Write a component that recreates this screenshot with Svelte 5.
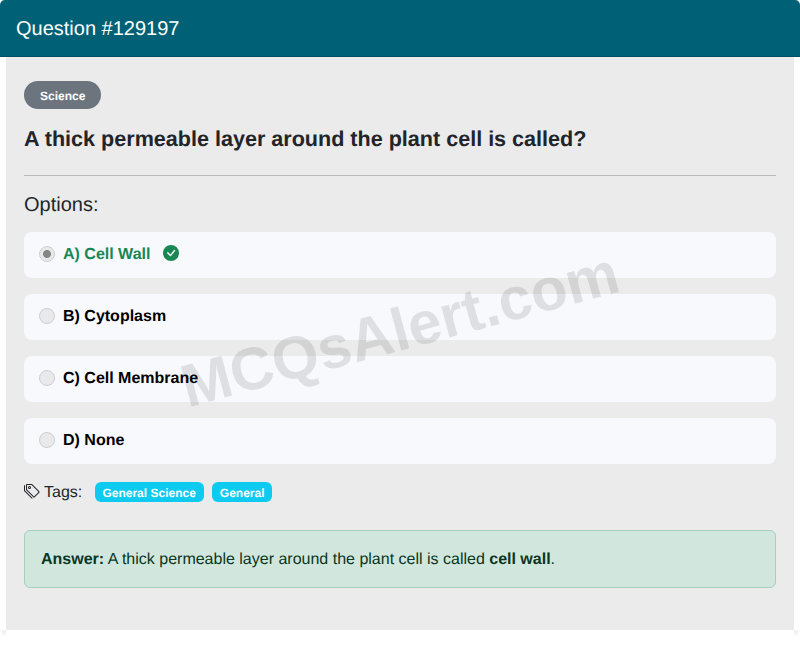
<script>
  const question = {
    id: 129197,
    category: 'Science',
    text: 'A thick permeable layer around the plant cell is called?',
    options: [
      { key: 'A', label: 'Cell Wall', correct: true },
      { key: 'B', label: 'Cytoplasm', correct: false },
      { key: 'C', label: 'Cell Membrane', correct: false },
      { key: 'D', label: 'None', correct: false }
    ],
    tags: ['General Science', 'General']
  };
</script>

<div class="card">
  <div class="card-header">Question #{question.id}</div>
  <div class="card-body">
    <div class="watermark" aria-hidden="true">MCQsAlert.com</div>
    <span class="category">{question.category}</span>
    <h1 class="question">{question.text}</h1>
    <hr />
    <h2 class="options-title">Options:</h2>
    <ul class="options">
      {#each question.options as option (option.key)}
        <li class="option" class:correct={option.correct}>
          <span class="radio"></span>
          <span class="option-label">{option.key}) {option.label}</span>
          {#if option.correct}
            <svg class="check" viewBox="0 0 16 16" fill="currentColor">
              <path d="M16 8A8 8 0 1 1 0 8a8 8 0 0 1 16 0m-3.97-3.03a.75.75 0 0 0-1.08.022L7.477 9.417 5.384 7.323a.75.75 0 0 0-1.06 1.06L6.97 11.03a.75.75 0 0 0 1.079-.02l3.992-4.99a.75.75 0 0 0-.01-1.05z" />
            </svg>
          {/if}
        </li>
      {/each}
    </ul>
    <div class="tags">
      <svg class="tags-icon" viewBox="0 0 16 16" fill="currentColor">
        <path d="M3 2v4.586l7 7L14.586 9l-7-7zM2 2a1 1 0 0 1 1-1h4.586a1 1 0 0 1 .707.293l7 7a1 1 0 0 1 0 1.414l-4.586 4.586a1 1 0 0 1-1.414 0l-7-7A1 1 0 0 1 2 6.586z" />
        <path d="M5.5 5a.5.5 0 1 1 0-1 .5.5 0 0 1 0 1m0 1a1.5 1.5 0 1 0 0-3 1.5 1.5 0 0 0 0 3M1 7.086a1 1 0 0 0 .293.707L8.75 15.25l-.043.043a1 1 0 0 1-1.414 0l-7-7A1 1 0 0 1 0 7.586V3a1 1 0 0 1 1-1z" />
      </svg>
      <span class="tags-label">Tags:</span>
      {#each question.tags as tag}
        <span class="tag">{tag}</span>
      {/each}
    </div>
    <div class="answer">
      <strong>Answer:</strong> A thick permeable layer around the plant cell is called <strong>cell wall</strong>.
    </div>
  </div>
  <div class="card-foot"></div>
</div>

<style>
  :global(body) {
    background: #fff;
  }

  .card {
    color: #212529;
    font: 16px/24px "Liberation Sans", Arial, sans-serif;
    text-rendering: geometricPrecision;
  }

  .card-header {
    box-sizing: border-box;
    height: 57px;
    padding: 17px 16px 15px;
    border-bottom: 1px solid #004e61;
    border-radius: 5px 5px 0 0;
    background: #006176;
    color: #fff;
    font-size: 20px;
  }

  .card-body {
    position: relative;
    box-sizing: border-box;
    height: 573px;
    margin: 0 6px;
    padding: 24px 18px;
    background: #ebebeb;
  }

  .watermark {
    position: absolute;
    top: 237px;
    left: 169px;
    width: 450px;
    color: rgba(0, 0, 0, 0.1);
    font-size: 60px;
    font-weight: 700;
    line-height: 72px;
    white-space: nowrap;
    transform: rotate(-15deg);
    pointer-events: none;
  }

  .category {
    display: block;
    box-sizing: border-box;
    width: fit-content;
    height: 28px;
    padding: 9px 16px 7px;
    border-radius: 14px;
    background: #6c757d;
    color: #fff;
    font-size: 12px;
    font-weight: 700;
    line-height: 12px;
  }

  .question {
    margin: 16px 0 23px;
    font-size: 21.57px;
    font-weight: 700;
    line-height: 27px;
  }

  hr {
    height: 1px;
    margin: 0 0 17px;
    border: 0;
    background: #b8b9b9;
  }

  .options-title {
    margin: 0 0 15px;
    font-size: 20px;
    font-weight: 400;
    line-height: 24px;
  }

  .options {
    display: flex;
    flex-direction: column;
    gap: 16px;
    margin: 0;
    padding: 0;
    list-style: none;
  }

  .option {
    display: flex;
    align-items: center;
    box-sizing: border-box;
    height: 46px;
    padding: 0 15px 2px;
    border-radius: 8px;
    background: #f8f9fd;
    color: #000;
    font-weight: 700;
  }

  .option.correct {
    color: #198754;
  }

  .option-label {
    padding-top: 2px;
  }

  .radio {
    box-sizing: border-box;
    width: 16px;
    height: 16px;
    margin-right: 8px;
    border: 1px solid #cdced0;
    border-radius: 50%;
    background: #e9e9eb;
  }

  .correct .radio {
    background: radial-gradient(circle, #868686 3.6px, #e9e9eb 4.4px);
  }

  .check {
    width: 16px;
    height: 16px;
    margin: 0 0 2px 13px;
  }

  .tags {
    display: flex;
    align-items: center;
    height: 24px;
    margin: 16px 0 26px;
  }

  .tags-icon {
    width: 16px;
    height: 16px;
    margin: 0 4px 2px 0;
  }

  .tags-label {
    padding-top: 2px;
    margin-right: 4px;
  }

  .tag {
    margin-left: 8.4px;
    padding: 5px 7.8px 3px;
    border-radius: 6px;
    background: #0dcaf0;
    color: #fff;
    font-size: 12px;
    font-weight: 700;
    line-height: 12px;
  }

  .answer {
    box-sizing: border-box;
    height: 58px;
    padding: 17px 16px 15px;
    border: 1px solid #a3cfbb;
    border-radius: 6px;
    background: #d1e7dd;
    color: #0a3622;
  }

  .card-foot {
    display: flex;
    justify-content: space-between;
  }

  .card-foot::before,
  .card-foot::after {
    width: 6px;
    height: 6px;
    content: "";
  }

  .card-foot::before {
    border-bottom-left-radius: 6px;
    background: radial-gradient(circle at top right, #ebebeb, #fafafa 6px);
  }

  .card-foot::after {
    border-bottom-right-radius: 6px;
    background: radial-gradient(circle at top left, #ebebeb, #fafafa 6px);
  }
</style>
